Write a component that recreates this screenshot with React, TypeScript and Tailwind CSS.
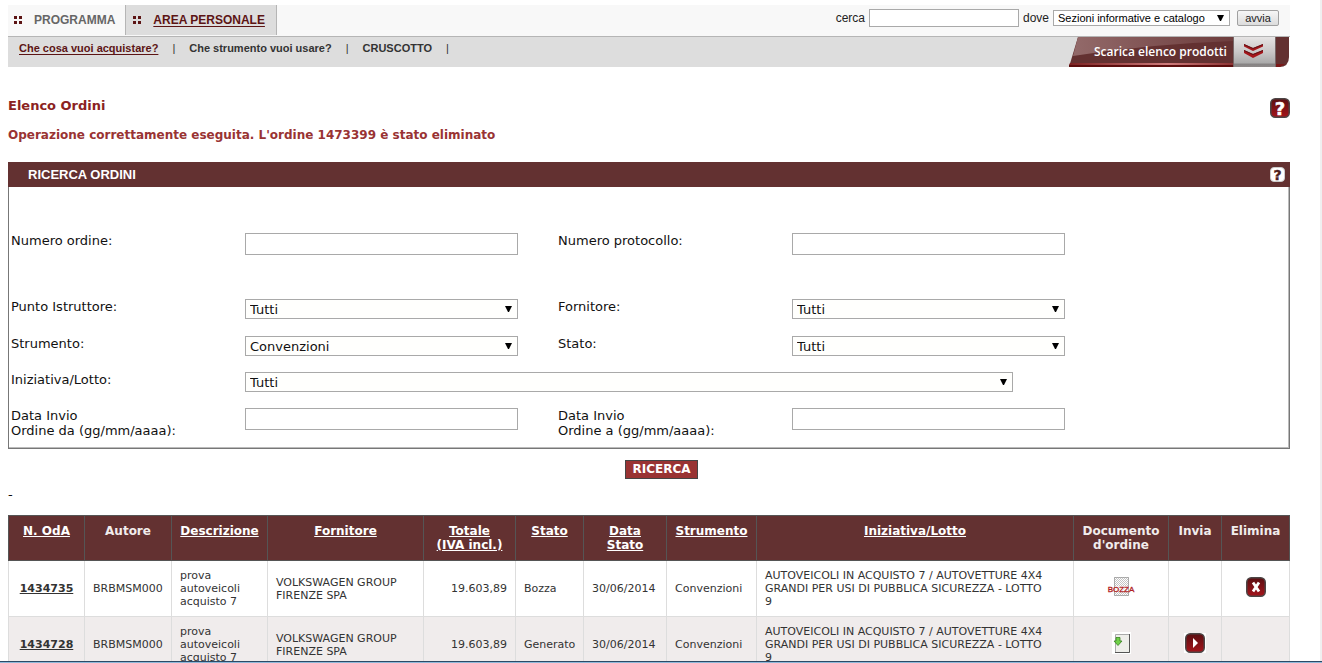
import type { ReactNode } from "react";

const orders = [
  { id: "1434735", status: "Bozza", draft: true },
  { id: "1434728", status: "Generato", draft: false },
];

const columns = [
  { lines: ["N. OdA"], width: "w-[76px]", sortable: true },
  { lines: ["Autore"], width: "w-[87px]", sortable: false },
  { lines: ["Descrizione"], width: "w-[96px]", sortable: true },
  { lines: ["Fornitore"], width: "w-[156px]", sortable: true },
  { lines: ["Totale", "(IVA incl.)"], width: "w-[92px]", sortable: true },
  { lines: ["Stato"], width: "w-[68px]", sortable: true },
  { lines: ["Data", "Stato"], width: "w-[83px]", sortable: true },
  { lines: ["Strumento"], width: "w-[90px]", sortable: true },
  { lines: ["Iniziativa/Lotto"], width: "w-auto", sortable: true },
  { lines: ["Documento", "d'ordine"], width: "w-[95px]", sortable: false },
  { lines: ["Invia"], width: "w-[53px]", sortable: false },
  { lines: ["Elimina"], width: "w-[68px]", sortable: false },
];

const Dots = () => (
  <svg width="8" height="8" viewBox="0 0 8 8" fill="#5c1414" aria-hidden="true">
    <rect width="3" height="3" />
    <rect x="5" width="3" height="3" />
    <rect y="5" width="3" height="3" />
    <rect x="5" y="5" width="3" height="3" />
  </svg>
);

const Arrow = () => (
  <svg className="pointer-events-none absolute right-[6px] top-1/2 -translate-y-1/2" width="7" height="6" viewBox="0 0 7 6" aria-hidden="true">
    <path d="M0 0h7L4 6H3z" fill="#000" />
  </svg>
);

const RedTile = ({ children }: { children: ReactNode }) => (
  <svg width="20" height="20" viewBox="0 0 20 20" aria-hidden="true">
    <defs>
      <linearGradient id="tile" x1="0" y1="0" x2="0" y2="1">
        <stop offset="0" stopColor="#5a0f12" />
        <stop offset="1" stopColor="#a5141b" />
      </linearGradient>
    </defs>
    <rect x="0.75" y="0.75" width="18.5" height="18.5" rx="4.5" fill="url(#tile)" stroke="#4c4646" strokeWidth="1.5" />
    {children}
  </svg>
);

const DraftIcon = () => (
  <svg width="28" height="20" viewBox="0 0 28 20" aria-hidden="true">
    <defs>
      <pattern id="mesh" width="2" height="2" patternUnits="userSpaceOnUse">
        <rect width="1" height="1" fill="#c4c4c4" />
        <rect x="1" y="1" width="1" height="1" fill="#c4c4c4" />
      </pattern>
    </defs>
    <rect x="7.5" y="0.5" width="14" height="18" fill="#fff" />
    <rect x="7.5" y="0.5" width="14" height="18" fill="url(#mesh)" stroke="#666" strokeDasharray="1 1" />
    <rect x="8" y="9" width="13" height="6" fill="#fff" fillOpacity="0.6" />
    <text x="14" y="15" textAnchor="middle" fontSize="8" fontFamily="Liberation Sans, sans-serif" fill="#b01c1c" stroke="#b01c1c" strokeWidth="0.3">
      BOZZA
    </text>
  </svg>
);

const DocumentIcon = () => (
  <svg width="19" height="22" viewBox="0 0 19 22" aria-hidden="true">
    <rect width="19" height="22" fill="#fff" />
    <path d="M3.5 2.5h14v18h-14z" fill="#eeeeea" stroke="#aaa" />
    <path d="M17.5 2v18.5H3" fill="none" stroke="#555" />
    <path d="M4 5.5h4v3.500h2l-4 4.500-4-4.500h2z" fill="#6fd048" stroke="#37801f" strokeWidth="0.8" />
  </svg>
);

const TextField = ({ id, label, children }: { id: string; label: string; children?: ReactNode }) => (
  <>
    <label htmlFor={id}>{children ?? label}</label>
    <div>
      <input id={id} type="text" className="block h-[22px] w-[273px] max-w-full border border-[#a9a9a9] bg-white px-1" />
    </div>
  </>
);

const SelectField = ({ id, label, value, wide = false }: { id: string; label: string; value: string; wide?: boolean }) => (
  <>
    <label htmlFor={id}>{label}</label>
    <div className={wide ? "col-span-3" : ""}>
      <div className={`relative max-w-full ${wide ? "w-[768px]" : "w-[273px]"}`}>
        <select id={id} className="block h-5 w-full appearance-none border border-[#a9a9a9] bg-[#fffffd] px-1 pt-px leading-[18px]">
          <option>{value}</option>
        </select>
        <Arrow />
      </div>
    </div>
  </>
);

const Banner = () => (
  <a href="#scarica" className="relative flex h-[30px] w-[221px] items-center pl-[25px]">
    <svg className="absolute inset-0" width="221" height="30" viewBox="0 0 221 30" aria-hidden="true">
      <defs>
        <linearGradient id="silver" x1="0" y1="0" x2="0" y2="1">
          <stop offset="0" stopColor="#e6e4e4" />
          <stop offset="0.500" stopColor="#c9c7c7" />
          <stop offset="0.870" stopColor="#aaa" />
          <stop offset="0.900" stopColor="#858282" />
          <stop offset="1" stopColor="#8e8a8a" />
        </linearGradient>
        <linearGradient id="shine" x1="0" y1="0" x2="1" y2="0">
          <stop offset="0" stopColor="#7b2222" />
          <stop offset="0.600" stopColor="#cf7c7c" />
          <stop offset="1" stopColor="#8c3434" />
        </linearGradient>
        <linearGradient id="gloss" x1="0" y1="0" x2="1" y2="0">
          <stop offset="0" stopColor="#936a6a" />
          <stop offset="1" stopColor="#6d3d3d" />
        </linearGradient>
      </defs>
      <path d="M205 30h16V0h-2z" fill="#fff" />
      <path d="M9 0h211v20q0 10-10 10H0z" fill="#633131" />
      <path d="M9 0h155v4Q80 7 4 19z" fill="url(#gloss)" />
      <path d="M1 26h163v2H0z" fill="url(#shine)" />
      <path d="M0 28h164v2H0z" fill="#5c0d0d" />
      <path d="M207 27h9l-5 3h-4z" fill="#7b1717" />
      <rect x="164" width="43" height="30" fill="url(#silver)" />
      <path d="M164.500 0v30M206.500 0v30" stroke="#776868" />
      <path d="M175 7l9 4 10-4v2.500l-10 4.500-9-4.500zM175 13l9 4 10-4v3l-10 5-9-5z" fill="#a5161b" />
      <path d="M175 7l9 4 10-4v1l-10 4-9-4zM175 13l9 4 10-4v1l-10 4-9-4z" fill="#5d1518" />
    </svg>
    <span className="relative font-['Open_Sans',sans-serif] text-xs font-semibold leading-4 text-white">Scarica elenco prodotti</span>
  </a>
);

const Header = () => (
  <header className="font-['Liberation_Sans',Arial,sans-serif]">
    <div className="flex h-8 items-start justify-between border-b border-[#b5b5b5] bg-[#f8f8f8]">
      <nav className="flex text-xs font-bold">
        <a href="#programma" className="flex h-[30px] items-center gap-3 pl-[6px] pr-[10px] text-[#666]">
          <Dots />
          PROGRAMMA
        </a>
        <a href="#area" className="flex h-[30px] items-center gap-3 border-x border-[#b5b5b5] bg-[#ddd] pl-[7px] pr-[11px] text-[#5c1414]">
          <Dots />
          <span className="underline underline-offset-2">AREA PERSONALE</span>
        </a>
      </nav>
      <form className="flex items-center gap-1 pr-[11px] pt-1 text-xs text-[#222]">
        <label htmlFor="cerca">cerca</label>
        <input id="cerca" type="text" className="h-[18px] w-[150px] border border-[#a9a9a9] bg-white px-1" />
        <label htmlFor="dove">dove</label>
        <div className="relative">
          <select id="dove" className="block h-4 w-[177px] appearance-none border border-[#a9a9a9] bg-white px-1 text-[11px] leading-[14px] text-black">
            <option>Sezioni informative e catalogo</option>
          </select>
          <Arrow />
        </div>
        <button type="button" className="ml-[3px] h-4 w-[42px] rounded-xs border border-[#a0a0a0] bg-linear-to-b from-[#f6f6f6] to-[#dcdcdc] text-[11px] leading-[14px]">
          avvia
        </button>
      </form>
    </div>
    <div className="flex items-start justify-between bg-[#ddd]">
      <nav className="flex gap-[14px] pl-[11px] pt-[3px] text-[11px] font-bold leading-4 text-[#333]">
        <a href="#acquistare" className="text-[#5c1414] underline underline-offset-2">Che cosa vuoi acquistare?</a>
        <span className="font-normal">|</span>
        <a href="#strumento">Che strumento vuoi usare?</a>
        <span className="font-normal">|</span>
        <a href="#cruscotto">CRUSCOTTO</a>
        <span className="font-normal">|</span>
      </nav>
      <Banner />
    </div>
  </header>
);

const SearchPanel = () => (
  <form>
    <div className="flex h-[25px] items-center justify-between bg-[#633131] pl-5 pr-[5px]">
      <h2 className="font-['Liberation_Sans',Arial,sans-serif] text-[13px] font-bold text-white">RICERCA ORDINI</h2>
      <button type="button" aria-label="Aiuto ricerca">
        <svg width="15" height="15" viewBox="0 0 15 15" aria-hidden="true">
          <rect x="0.500" y="0.500" width="14" height="14" rx="3.500" fill="#fff" stroke="#ccc" />
          <text x="7.500" y="12.500" textAnchor="middle" fontSize="14" fontWeight="bold" fontFamily="DejaVu Sans, sans-serif" fill="#4d2020" stroke="#4d2020" strokeWidth="0.400">?</text>
        </svg>
      </button>
    </div>
    <div className="grid grid-cols-[234fr_313fr_234fr_495fr] items-start border border-t-0 border-[#777] px-[2px] pb-[10px] pt-[46px] leading-[15px] shadow-[inset_-1px_-1px_0_#bbb]">
      <TextField id="ordine" label="Numero ordine:" />
      <TextField id="protocollo" label="Numero protocollo:" />
      <div className="col-span-4 h-11" />
      <SelectField id="punto" label="Punto Istruttore:" value="Tutti" />
      <SelectField id="fornitore" label="Fornitore:" value="Tutti" />
      <div className="col-span-4 h-[17px]" />
      <SelectField id="strumento" label="Strumento:" value="Convenzioni" />
      <SelectField id="stato" label="Stato:" value="Tutti" />
      <div className="col-span-4 h-4" />
      <SelectField id="iniziativa" label="Iniziativa/Lotto:" value="Tutti" wide />
      <div className="col-span-4 h-4" />
      <TextField id="da" label="Data Invio">
        Data Invio<br />Ordine da (gg/mm/aaaa):
      </TextField>
      <TextField id="a" label="Data Invio">
        Data Invio<br />Ordine a (gg/mm/aaaa):
      </TextField>
    </div>
    <div className="flex justify-center pt-[11px]">
      <button type="submit" className="ml-[25px] h-[19px] border border-[#444] bg-[#993333] px-[6px] text-xs font-bold leading-[17px] text-white">
        RICERCA
      </button>
    </div>
  </form>
);

const HeaderLines = ({ lines }: { lines: string[] }) => (
  <>
    {lines.map((line) => (
      <span key={line} className="block">{line}</span>
    ))}
  </>
);

const OrdersTable = () => (
  <table className="w-full table-fixed border-collapse text-[11px] leading-[13px] text-[#333]">
    <colgroup>
      {columns.map((c) => (
        <col key={c.lines[0]} className={c.width} />
      ))}
    </colgroup>
    <thead>
      <tr className="h-[45px] bg-[#633131] align-top text-xs leading-[14px] text-[#f1ecec]">
        {columns.map((c) => (
          <th key={c.lines[0]} className="border border-[#555] px-1 pt-2 font-bold">
            {c.sortable ? (
              <a href="#ordina" className="text-white underline">
                <HeaderLines lines={c.lines} />
              </a>
            ) : (
              <HeaderLines lines={c.lines} />
            )}
          </th>
        ))}
      </tr>
    </thead>
    <tbody>
      {orders.map((o) => (
        <tr key={o.id} className="h-14 even:bg-[#f0ecec] [&>td]:border [&>td]:border-[#ddd]">
          <td className="p-2 text-center font-bold">
            <a href="#ordine" className="underline underline-offset-1">{o.id}</a>
          </td>
          <td className="p-2">BRBMSM000</td>
          <td className="p-2">prova autoveicoli acquisto 7</td>
          <td className="p-2">VOLKSWAGEN GROUP FIRENZE SPA</td>
          <td className="p-2 text-right">19.603,89</td>
          <td className="p-2">{o.status}</td>
          <td className="p-2">30/06/2014</td>
          <td className="p-2">Convenzioni</td>
          <td className="py-2 pl-2 pr-6">AUTOVEICOLI IN ACQUISTO 7 / AUTOVETTURE 4X4 GRANDI PER USI DI PUBBLICA SICUREZZA - LOTTO 9</td>
          <td className="px-2 pb-3 pt-2">
            <a href="#documento" aria-label="Documento d'ordine" className="flex justify-center">
              {o.draft ? <DraftIcon /> : <DocumentIcon />}
            </a>
          </td>
          <td className="px-2 pb-3 pt-2">
            {!o.draft && (
              <button type="button" aria-label="Invia" className="mx-auto block bg-white px-px">
                <RedTile>
                  <path d="M8 5l5 5-5 5z" fill="#fff" />
                </RedTile>
              </button>
            )}
          </td>
          <td className="px-2 pb-3 pt-2">
            {o.draft && (
              <button type="button" aria-label="Elimina" className="mx-auto block">
                <RedTile>
                  <path d="M7 5.500l6 9M13 5.500l-6 9" stroke="#fff" strokeWidth="2.800" />
                </RedTile>
              </button>
            )}
          </td>
        </tr>
      ))}
    </tbody>
  </table>
);

export default function App() {
  return (
    <div className="flex h-screen flex-col bg-white font-['DejaVu_Sans',Verdana,sans-serif] text-[13px] text-[#111]">
      <div className="min-h-0 flex-1 overflow-hidden border-r-2 border-[#f0f0f0] pl-2 pr-[30px] pt-[5px]">
        <Header />
        <main>
          <div className="flex items-start justify-between pt-[31px] font-bold leading-4 text-[#933]">
            <div>
              <h1 className="text-[13px] text-[#8b2222]">Elenco Ordini</h1>
              <p className="pt-[13px] text-xs leading-4">Operazione correttamente eseguita. L'ordine 1473399 è stato eliminato</p>
            </div>
            <button type="button" aria-label="Aiuto">
              <RedTile>
                <text x="10" y="16.500" textAnchor="middle" fontSize="18" fontWeight="bold" fontFamily="DejaVu Sans, sans-serif" fill="#fff" stroke="#fff" strokeWidth="0.500">?</text>
              </RedTile>
            </button>
          </div>
          <div className="pt-[19px]">
            <SearchPanel />
          </div>
          <p className="pb-3 pt-2 leading-4">-</p>
          <OrdersTable />
        </main>
      </div>
      {/* Upper edge of the desktop taskbar */}
      <div className="h-[2px] shrink-0 border-t border-[#2b4a66] bg-[#8fb8d8]" />
    </div>
  );
}
